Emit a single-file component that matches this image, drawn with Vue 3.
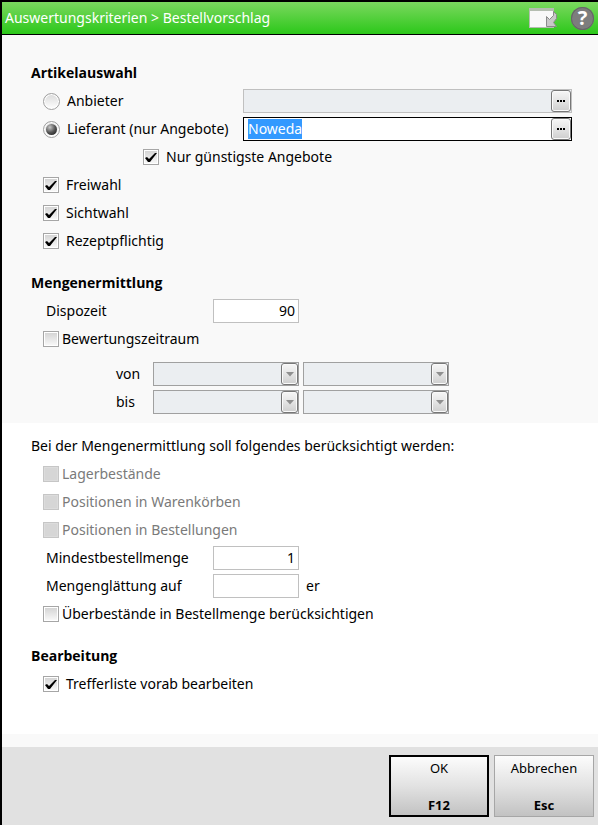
<script setup>
import { onMounted, reactive, ref } from 'vue';

const supplierInput = ref(null);

const form = reactive({
    source: 'lieferant',
    anbieter: '',
    lieferant: 'Noweda',
    cheapestOnly: true,
    freiwahl: true,
    sichtwahl: true,
    rezeptpflichtig: true,
    dispozeit: '90',
    bewertungszeitraum: false,
    mindestmenge: '1',
    glaettung: '',
    ueberbestaende: false,
    trefferliste: true
});

const assortments = [
    { key: 'freiwahl', label: 'Freiwahl' },
    { key: 'sichtwahl', label: 'Sichtwahl' },
    { key: 'rezeptpflichtig', label: 'Rezeptpflichtig' }
];

const periods = ['von', 'bis'];

const stockOptions = [
    { id: 'lager', label: 'Lagerbestände' },
    { id: 'warenkorb', label: 'Positionen in Warenkörben' },
    { id: 'bestellung', label: 'Positionen in Bestellungen' }
];

onMounted(() => {
    supplierInput.value.focus();
    supplierInput.value.select();
});
</script>
<template>
    <form class="dialog" @submit.prevent>
        <header class="titlebar">
            <h1 class="title">Auswertungskriterien &gt; Bestellvorschlag</h1>
            <button type="button" class="icon-btn" aria-label="Fenster">
                <svg width="28" height="20" viewBox="0 0 28 20">
                    <rect x="0" y="0" width="25" height="20" fill="#b4bdb0" />
                    <rect x="1" y="3" width="23" height="16" fill="#f8f8f8" />
                    <path d="M17.500 8.500L20.500 11.500L24.500 7.500V3.500L27.500 6.500V10.500L24.500 14.500L27.500 18.500H17.500Z" fill="#c8c8c8" stroke="#8a8a8a" />
                </svg>
            </button>
            <button type="button" class="help-btn" aria-label="Hilfe">?</button>
        </header>

        <main class="content">
            <section class="panel">
                <h2 class="heading">Artikelauswahl</h2>
                <div class="row">
                    <label class="option wide">
                        <input type="radio" value="anbieter" v-model="form.source" class="radio" />
                        <span>Anbieter</span>
                    </label>
                    <div class="lookup disabled">
                        <input type="text" v-model="form.anbieter" aria-label="Anbieter" disabled />
                        <button type="button" class="side-btn more" aria-label="Anbieter wählen"><i></i><i></i><i></i></button>
                    </div>
                </div>
                <div class="row">
                    <label class="option wide">
                        <input type="radio" value="lieferant" v-model="form.source" class="radio" />
                        <span>Lieferant (nur Angebote)</span>
                    </label>
                    <div class="lookup active">
                        <input ref="supplierInput" type="text" v-model="form.lieferant" aria-label="Lieferant" />
                        <button type="button" class="side-btn more" aria-label="Lieferant wählen"><i></i><i></i><i></i></button>
                    </div>
                </div>
                <div class="row nested">
                    <label class="option">
                        <input type="checkbox" v-model="form.cheapestOnly" class="check" />
                        <span>Nur günstigste Angebote</span>
                    </label>
                </div>
                <div class="row" v-for="item in assortments" :key="item.key">
                    <label class="option">
                        <input type="checkbox" v-model="form[item.key]" class="check" />
                        <span>{{ item.label }}</span>
                    </label>
                </div>

                <h2 class="heading next">Mengenermittlung</h2>
                <div class="row">
                    <label for="dispozeit" class="field-label">Dispozeit</label>
                    <input id="dispozeit" type="text" v-model="form.dispozeit" class="number" />
                </div>
                <div class="row">
                    <label class="option tight">
                        <input type="checkbox" v-model="form.bewertungszeitraum" class="check" />
                        <span>Bewertungszeitraum</span>
                    </label>
                </div>
                <div class="periods">
                    <div class="row period" v-for="period in periods" :key="period">
                        <label :for="period" class="period-label">{{ period }}</label>
                        <div class="dropdown" v-for="n in 2" :key="n">
                            <select :id="n === 1 ? period : null" :aria-label="period" disabled></select>
                            <span class="side-btn">
                                <svg width="8" height="5" viewBox="0 0 8 5">
                                    <path d="M0 0H8L4 4.500Z" fill="#8f8f8f" />
                                </svg>
                            </span>
                        </div>
                    </div>
                </div>
            </section>

            <section class="panel white">
                <p class="intro">Bei der Mengenermittlung soll folgendes berücksichtigt werden:</p>
                <div class="row" v-for="option in stockOptions" :key="option.id">
                    <label class="option tight off">
                        <input type="checkbox" class="check" disabled />
                        <span>{{ option.label }}</span>
                    </label>
                </div>
                <div class="row">
                    <label for="mindestmenge" class="field-label">Mindestbestellmenge</label>
                    <input id="mindestmenge" type="text" v-model="form.mindestmenge" class="number" />
                </div>
                <div class="row">
                    <label for="glaettung" class="field-label">Mengenglättung auf</label>
                    <input id="glaettung" type="text" v-model="form.glaettung" class="number" />
                    <span class="unit">er</span>
                </div>
                <div class="row">
                    <label class="option tight">
                        <input type="checkbox" v-model="form.ueberbestaende" class="check" />
                        <span>Überbestände in Bestellmenge berücksichtigen</span>
                    </label>
                </div>

                <h2 class="heading next">Bearbeitung</h2>
                <div class="row">
                    <label class="option">
                        <input type="checkbox" v-model="form.trefferliste" class="check" />
                        <span>Trefferliste vorab bearbeiten</span>
                    </label>
                </div>
            </section>
        </main>

        <footer class="footer">
            <button type="submit" class="action primary">
                <span>OK</span>
                <b>F12</b>
            </button>
            <button type="button" class="action">
                <span>Abbrechen</span>
                <b>Esc</b>
            </button>
        </footer>
    </form>
</template>
<style>
body {
    background: #f9f9f9;
}
</style>
<style scoped>
.dialog {
    box-sizing: border-box;
    display: flex;
    flex-direction: column;
    min-height: 100vh;
    border-top: 2px solid #000;
    border-left: 2px solid #000;
    background: #f9f9f9;
    color: #000;
    font-family: "Noto Sans", "Open Sans", sans-serif;
    font-size: 14px;
    line-height: 20px;
}

.dialog *,
.dialog *::before {
    box-sizing: border-box;
}

input,
select,
button {
    margin: 0;
    padding: 0;
    border: none;
    border-radius: 0;
    outline: none;
    background: none;
    color: inherit;
    font: inherit;
}

.titlebar {
    display: flex;
    align-items: center;
    height: 33px;
    padding: 0 4px 0 3px;
    border-bottom: 1px solid #000;
    background: linear-gradient(#7bd85f, #2cc81a);
}

.title {
    flex: 1;
    margin: 0;
    color: #fff;
    font-size: 14px;
    font-weight: 400;
}

.icon-btn {
    display: flex;
    margin-right: 14px;
}

.help-btn {
    width: 23px;
    height: 23px;
    border-radius: 50%;
    background: #7d7d7d;
    box-shadow: inset 0 0 0 1px #666;
    color: #fff;
    font-size: 20px;
    font-weight: 700;
    line-height: 22px;
}

.content {
    flex: 1;
    padding-bottom: 13px;
}

.panel {
    padding: 24px 26px 7px 29px;
}

.panel.white {
    padding-top: 9px;
    padding-bottom: 36px;
    background: #fff;
}

.heading {
    margin: 0;
    font-family: "Open Sans", "Noto Sans", sans-serif;
    font-size: 14px;
    font-weight: 700;
    line-height: 28px;
}

.heading.next {
    margin-top: 14px;
}

.intro {
    margin: 0;
    line-height: 28px;
}

.row {
    display: flex;
    align-items: center;
    height: 28px;
    padding-left: 12px;
}

.nested {
    padding-left: 112px;
}

.option {
    display: flex;
    align-items: center;
    gap: 7px;
    white-space: nowrap;
}

.option.wide {
    width: 200px;
}

.option.tight {
    gap: 3px;
}

.option.off {
    color: #7a7a7a;
}

.check {
    appearance: none;
    width: 16px;
    height: 16px;
    border: 1px solid #a6a6a6;
    background: linear-gradient(#d2d2d2, #fafafa);
    box-shadow: inset 0 0 0 1px #fff;
}

.check:checked::before {
    content: "";
    display: block;
    width: 14px;
    height: 14px;
    background: #000;
    clip-path: polygon(1px 8px, 3px 7px, 5px 9px, 11px 3px, 13px 3px, 6px 12px, 4px 12px);
}

.check:disabled {
    border-color: #c6c6c6;
    background: #d6d6d6;
    box-shadow: inset 0 0 0 1px #dcdcdc;
}

.radio {
    appearance: none;
    width: 17px;
    height: 17px;
    border: 1px solid #a0a0a0;
    border-radius: 50%;
    background: linear-gradient(#dadada, #fff);
    box-shadow: inset 0 0 0 1px #fff;
}

.radio:checked::before {
    content: "";
    display: block;
    width: 11px;
    height: 11px;
    margin: 2px;
    border-radius: 50%;
    background: radial-gradient(circle at 35% 30%, #c8c8c8, #555 50%, #111);
}

.lookup,
.dropdown {
    display: flex;
    height: 24px;
    border: 1px solid #c0c0c0;
    background: #ebeef1;
}

.lookup {
    flex: 1;
}

.lookup input {
    flex: 1;
    min-width: 0;
    padding-left: 4px;
}

.lookup.active {
    border-color: #000;
    background: #fff;
}

.lookup input::selection {
    background: #3399ff;
    color: #fff;
}

.side-btn {
    display: flex;
    align-items: center;
    justify-content: center;
    width: 17px;
    height: 22px;
    border: 1px solid #777;
    border-radius: 3px;
    background: linear-gradient(#f6f6f6, #e4e4e4 50%, #cecece);
    box-shadow: inset 0 0 0 1px #fafafa;
}

.more {
    gap: 1px;
    width: 20px;
}

.more i {
    width: 2px;
    height: 2px;
    background: #000;
}

.field-label {
    width: 170px;
    padding-left: 3px;
}

.number {
    width: 86px;
    height: 24px;
    padding-right: 3px;
    padding-bottom: 1px;
    border: 1px solid #c0c0c0;
    background: #fff;
    text-align: right;
}

.unit {
    margin-left: 7px;
}

.periods {
    padding-top: 7px;
}

.period {
    gap: 4px;
    padding-left: 85px;
}

.period-label {
    width: 33px;
}

.dropdown {
    width: 146px;
    border-color: #a0a0a0;
}

.dropdown select {
    appearance: none;
    flex: 1;
    min-width: 0;
}

.footer {
    display: flex;
    justify-content: flex-end;
    gap: 5px;
    padding: 8px 4px 8px 0;
    background: #e1e1e1;
}

.action {
    display: flex;
    flex-direction: column;
    align-items: center;
    justify-content: space-between;
    width: 100px;
    height: 62px;
    padding: 2px 0 1px;
    border: 1px solid #a6a6a6;
    background: linear-gradient(#fcfcfc, #e2e2e2 50%, #c2c2c2);
    font-size: 13px;
}

.action.primary {
    border: 2px solid #000;
    padding: 1px 0 0;
}

.action b {
    font-weight: 700;
}
</style>
